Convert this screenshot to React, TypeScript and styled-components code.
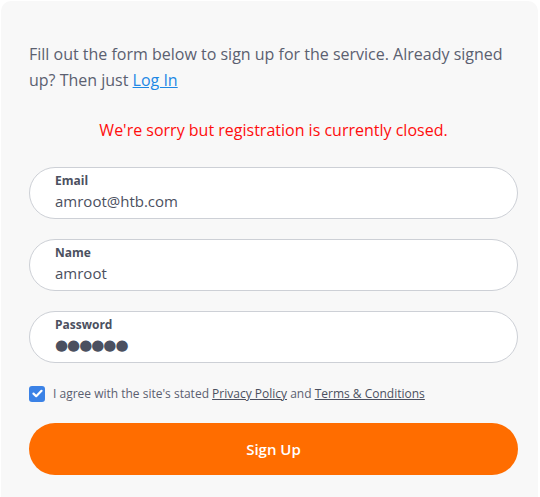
import React from "react";
import styled, { createGlobalStyle } from "styled-components";

const Global = createGlobalStyle`
  html, body { margin: 0; padding: 0; background: #ffffff; }
  body { font-family: "Open Sans", "Noto Sans", sans-serif; }
  * { box-sizing: border-box; }
`;

const Card = styled.div`
  margin: 1px 2px 0 1px;
  background: #f8f8f8;
  border-radius: 10px 10px 0 0;
  padding: 40px 20px 22px 28px;
  display: flex;
  flex-direction: column;
`;

const Intro = styled.p`
  margin: 0;
  font-size: 16px;
  line-height: 26px;
  color: #5b6070;
`;

const Link = styled.a`
  color: #1e88e5;
  text-decoration: underline;
`;

const Closed = styled.p`
  margin: 24px 0 24px;
  font-size: 16px;
  line-height: 26px;
  color: #ff0d0d;
  text-align: center;
`;

const Fields = styled.div`
  display: flex;
  flex-direction: column;
  gap: 20px;
`;

const Field = styled.label`
  display: flex;
  flex-direction: column;
  height: 52px;
  background: #ffffff;
  border: 1px solid #cdd0d6;
  border-radius: 26px;
  padding: 4px 24px 0 25px;
`;

const FieldLabel = styled.span`
  font-size: 12px;
  line-height: 17px;
  font-weight: 700;
  color: #4b5060;
`;

const FieldInput = styled.input<{ $dots?: boolean }>`
  border: 0;
  outline: 0;
  background: transparent;
  padding: 0;
  margin: 0;
  font-family: ${(p) => (p.$dots ? '"DejaVu Sans", sans-serif' : '"Open Sans", "Noto Sans", sans-serif')};
  font-size: 15px;
  line-height: 24px;
  height: 24px;
  color: #4b5060;
  letter-spacing: ${(p) => (p.$dots ? "-1px" : "0")};
`;

const AgreeRow = styled.div`
  display: flex;
  align-items: center;
  gap: 8px;
  margin-top: 22px;
  font-size: 12px;
  color: #5b6070;
`;

const Box = styled.span`
  width: 16px;
  height: 16px;
  border-radius: 3px;
  background: #3b82e6;
  display: flex;
  align-items: center;
  justify-content: center;
  flex: none;
`;

const Under = styled.a`
  color: #4b5060;
  text-decoration: underline;
`;

const Button = styled.button`
  margin-top: 21px;
  height: 52px;
  border: 0;
  border-radius: 26px;
  background: #ff6d00;
  color: #ffffff;
  font-family: "Open Sans", "Noto Sans", sans-serif;
  font-size: 15px;
  font-weight: 600;
`;

export default function App() {
  return (
    <>
      <Global />
      <Card>
        <Intro>
          Fill out the form below to sign up for the service. Already signed up? Then just{" "}
          <Link href="#">Log In</Link>
        </Intro>
        <Closed>We're sorry but registration is currently closed.</Closed>
        <Fields>
          <Field>
            <FieldLabel>Email</FieldLabel>
            <FieldInput readOnly value="amroot@htb.com" />
          </Field>
          <Field>
            <FieldLabel>Name</FieldLabel>
            <FieldInput readOnly value="amroot" />
          </Field>
          <Field>
            <FieldLabel>Password</FieldLabel>
            <FieldInput readOnly $dots value="●●●●●●" />
          </Field>
        </Fields>
        <AgreeRow>
          <Box>
            <svg width="11" height="9" viewBox="0 0 11 9">
              <path d="M1.5 4.6 L4.2 7.2 L9.5 1.8" fill="none" stroke="#fff" strokeWidth="2.2" strokeLinecap="round" strokeLinejoin="round" />
            </svg>
          </Box>
          <span>
            I agree with the site's stated <Under href="#">Privacy Policy</Under> and{" "}
            <Under href="#">Terms &amp; Conditions</Under>
          </span>
        </AgreeRow>
        <Button>Sign Up</Button>
      </Card>
    </>
  );
}
